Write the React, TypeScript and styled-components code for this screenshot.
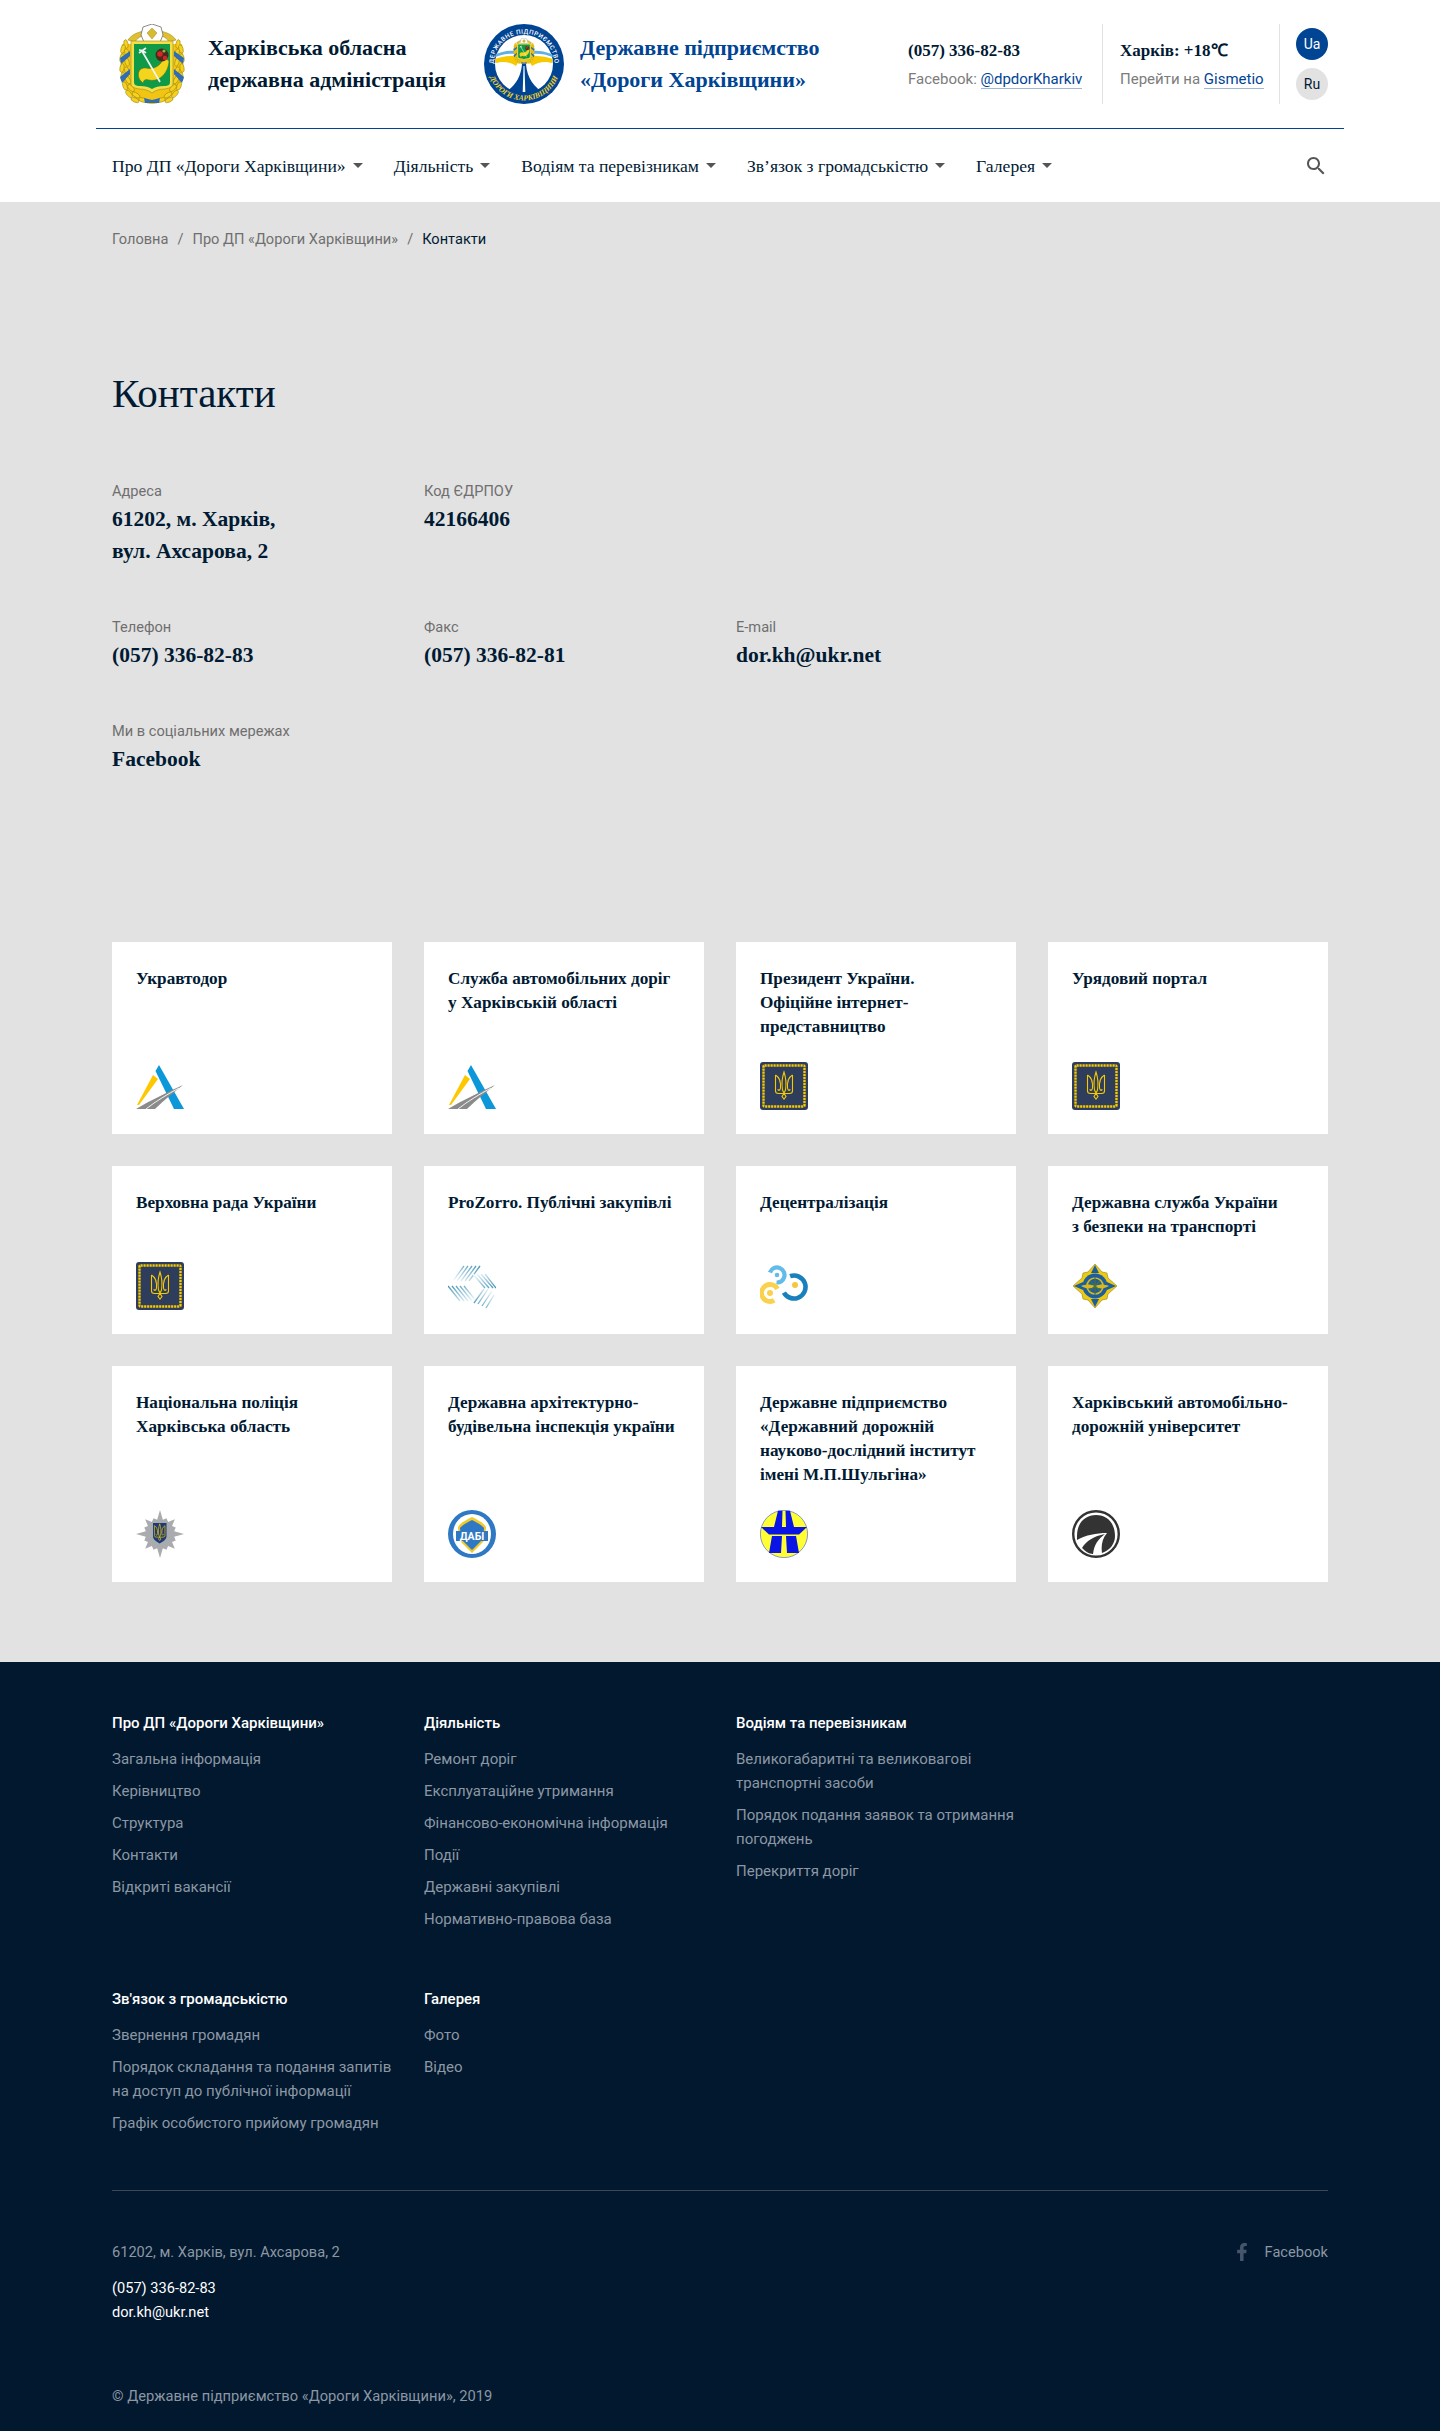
import React from "react";
import styled, { createGlobalStyle } from "styled-components";
import { FaFacebookF } from "react-icons/fa";

const SERIF = `"Liberation Serif", serif`;
const SANS = `"Roboto", "Noto Sans", sans-serif`;
const INK = "#011a33";
const BLUE = "#004494";

const Global = createGlobalStyle`
    * { box-sizing: border-box; }
    body {
        margin: 0;
        background: #e2e2e2;
        color: ${INK};
        font-family: ${SANS};
    }
    a { color: inherit; text-decoration: none; }
`;

const Container = styled.div`
    width: 1248px;
    margin: 0 auto;
`;

const HeaderBox = styled.header`
    background: #fff;
    height: 202px;
`;

const TopBar = styled.div`
    display: flex;
    align-items: center;
    height: 129px;
    padding: 0 0 1px 23px;
    border-bottom: 1px solid ${BLUE};
`;

const Brand = styled.a<{ $w: number }>`
    display: flex;
    align-items: center;
    width: ${(p) => p.$w}px;
    height: 80px;
    flex: none;
`;

const BrandName = styled.div<{ $blue?: boolean; $gap: number }>`
    margin-left: ${(p) => p.$gap}px;
    font: bold 22px/32px ${SERIF};
    color: ${(p) => (p.$blue ? BLUE : INK)};
    white-space: nowrap;
`;

const InfoCol = styled.div<{ $w: number; $last?: boolean }>`
    width: ${(p) => p.$w}px;
    height: 80px;
    padding-left: ${(p) => (p.$last ? 17 : 0)}px;
    border-right: 1px solid #e2e2e2;
    flex: none;
`;

const InfoTop = styled.div`
    font: bold 17px/24px ${SERIF};
    margin-top: 15px;
`;

const InfoSub = styled.div`
    font-size: 15px;
    line-height: 24px;
    margin-top: 4px;
    color: #7c7c7c;
`;

const BlueLink = styled.a`
    color: ${BLUE};
    border-bottom: 1px solid #9fb8d6;
`;

const LangCol = styled.div`
    display: flex;
    flex-direction: column;
    gap: 8px;
    margin-left: 16px;
`;

const Lang = styled.a<{ $active?: boolean }>`
    width: 32px;
    height: 32px;
    border-radius: 50%;
    display: flex;
    align-items: center;
    justify-content: center;
    font-size: 14px;
    background: ${(p) => (p.$active ? BLUE : "#e2e2e2")};
    color: ${(p) => (p.$active ? "#fff" : INK)};
`;

const NavBar = styled.nav`
    display: flex;
    align-items: center;
    height: 73px;
    padding: 0 16px;
`;

const NavItem = styled.a`
    display: flex;
    align-items: center;
    font: 17.6px/24px ${SERIF};
    margin-right: 31px;
    white-space: nowrap;

    &::after {
        content: "";
        margin-left: 7px;
        border-left: 5px solid transparent;
        border-right: 5px solid transparent;
        border-top: 5px solid #555;
    }
`;

const SearchBtn = styled.a`
    display: flex;
    margin-left: auto;
    color: #555;
`;

const Main = styled.main`
    padding: 25px 16px 80px;
`;

const Crumbs = styled.div`
    display: flex;
    font-size: 14.6px;
    line-height: 24px;
    color: #6f6f6f;
`;

const Sep = styled.span`
    margin: 0 9px;
`;

const Current = styled.span`
    color: ${INK};
`;

const Title = styled.h1`
    margin: 118px 0 62px;
    font: 400 41px/48px ${SERIF};
`;

const FieldGrid = styled.div`
    display: grid;
    grid-template-columns: repeat(4, 280px);
    column-gap: 32px;
    row-gap: 48px;
`;

const FieldLabel = styled.div`
    font-size: 14.6px;
    line-height: 24px;
    color: #6f6f6f;
`;

const FieldValue = styled.div`
    font: bold 21.5px/32px ${SERIF};
`;

const Cards = styled.div`
    display: grid;
    grid-template-columns: repeat(4, 280px);
    gap: 32px;
    margin-top: 167px;
`;

const Card = styled.a`
    display: flex;
    flex-direction: column;
    justify-content: space-between;
    gap: 23px;
    padding: 24px;
    background: #fff;
`;

const CardTitle = styled.div`
    margin-top: 1px;
    font: bold 17.2px/24px ${SERIF};
`;

const CardLogo = styled.svg`
    display: block;
    width: 48px;
    height: 48px;
`;

const FooterBox = styled.footer`
    background: #01182f;
    color: #8c97a3;
    padding: 49px 0 23px;
`;

const FooterInner = styled.div`
    padding: 0 16px;
`;

const FooterGrid = styled.div`
    display: grid;
    grid-template-columns: repeat(4, 280px);
    column-gap: 32px;
    row-gap: 56px;
`;

const FootHead = styled.div`
    font-size: 15px;
    font-weight: 500;
    line-height: 24px;
    color: #fff;
    margin-bottom: 12px;
`;

const FootLinks = styled.div`
    display: flex;
    flex-direction: column;
    gap: 8px;
    font-size: 15px;
    line-height: 24px;
`;

const Rule = styled.div`
    height: 1px;
    background: #39495a;
    margin: 55px 0 49px;
`;

const AddressRow = styled.div`
    display: flex;
    justify-content: space-between;
    align-items: center;
    font-size: 14.6px;
    line-height: 24px;
    margin-bottom: 12px;
`;

const FbLink = styled.a`
    display: flex;
    align-items: center;
    gap: 14px;
    svg {
        color: #46566a;
        font-size: 18px;
    }
`;

const WhiteLine = styled.div`
    color: #fff;
    font-size: 14.6px;
    line-height: 24px;
`;

const Copy = styled.div`
    margin-top: 60px;
    font-size: 14.7px;
    line-height: 24px;
`;

// wreath leaves of the oblast arms: [x, y, rotation] for the left side, mirrored for the right
const leaves: [number, number, number][] = [
    [7, 20, -10], [4, 25, 15], [8, 29, -15], [3, 34, 12], [8, 38, -15], [3, 44, 10], [8, 47, -20],
    [4, 53, 0], [9, 56, -30], [6, 62, -20], [12, 64, -45], [10, 70, -40], [17, 71, -60], [16, 76, -65], [24, 76, -75],
];

const Coat = () => (
    <>
        <path d="M3 20C0 40 1 60 11 70c6 6 14 9 20 10h4c6-1 14-4 20-10 10-10 11-30 8-50z" fill="#f2c414" />
        {leaves.map(([x, y, r], i) => (
            <g key={i}>
                <ellipse cx={x} cy={y} rx="2.1" ry="4.4" fill="#f6d21f" stroke="#8f7a14" strokeWidth=".5" transform={`rotate(${r} ${x} ${y})`} />
                <ellipse cx={66 - x} cy={y} rx="2.1" ry="4.4" fill="#f6d21f" stroke="#8f7a14" strokeWidth=".5" transform={`rotate(${-r} ${66 - x} ${y})`} />
            </g>
        ))}
        <path d="M1 34l10-7v5L2 40zM1 53l10-8v5L3 59zM65 34l-10-7v5l9 8zM65 53l-10-8v5l8 9zM25 74l8 2 8-2-1 5H26z" fill="#2f6db5" />
        <path d="M9 16c3-5 10-8 16-9l1 4c-4 1-8 3-10 7zM57 16c-3-5-10-8-16-9l-1 4c4 1 8 3 10 7z" fill="#e0c02e" stroke="#8f7a14" strokeWidth=".5" />
        <path d="M24 3l9-3 9 3 2 8-3 7H25l-3-7z" fill="#fff" stroke="#6d6d6d" strokeWidth=".8" />
        <path d="M33 4l5 5-5 6-5-6z" fill="#d8ba2e" stroke="#8f7a14" strokeWidth=".4" />
        <path d="M12 17h42v42c0 4-3 5-8 6-5 0-9 1-13 4-4-3-8-4-13-4-5-1-8-2-8-6z" fill="#f4de45" stroke="#9b8a1f" strokeWidth=".6" />
        <path d="M15 20h36v38c0 3-2 4-6 4-5 0-9 1-12 3-3-2-7-3-12-3-4 0-6-1-6-4z" fill="#0f9a48" />
        <path d="M21 56c-4-7 0-13 6-12 8 2 15-2 18-11l5 4c-1 13-10 21-20 19-3-1-5-1-6 3z" fill="#f4d51d" stroke="#76680e" strokeWidth=".5" />
        <path d="M23 27l18 31M20 29l7-5M20 26c3 0 5 1 7 3" stroke="#f2f2f2" strokeWidth="1.7" fill="none" />
        <circle cx="43" cy="31" r="6.5" fill="#4b2a1a" />
        <circle cx="41" cy="30" r="2.8" fill="#d3262a" />
        <circle cx="46" cy="34" r="2.2" fill="#d3262a" />
        <circle cx="45" cy="27" r="1.6" fill="#7fbf3a" />
    </>
);

const RoadLogo = () => (
    <svg width="80" height="80" viewBox="0 0 80 80">
        <defs>
            <path id="ringTop" d="M11 49.5A30.5 30.5 0 1 1 69 49.5" />
            <path id="ringBottom" d="M4.4 48A36.5 36.5 0 0 0 75.6 48" />
        </defs>
        <circle cx="40" cy="40" r="40" fill={BLUE} />
        <circle cx="40" cy="40" r="29" fill="#fff" />
        <path d="M11 35c9-3 18-4 26-2l-5 9c-6-4-13-5-20-3zM69 35c-9-3-18-4-26-2l5 9c6-4 13-5 20-3z" fill="#f6c900" />
        <path d="M12 30c8-3 15-4 21-3v3c-8-1-14 0-22 3zM68 30c-8-3-15-4-21-3v3c8-1 14 0 22 3z" fill="#5fb0e4" />
        <path d="M38 40h4c1 14 8 24 20 30L52 76H28l-10-6c12-6 19-16 20-30z" fill={BLUE} />
        <path d="M39.5 42h1l.8 26h-2.6z" fill="#fff" />
        <svg x="29" y="14" width="22" height="26" viewBox="0 0 66 80"><Coat /></svg>
        <text fill="#fff" fontFamily={SANS} fontSize="6.2" fontWeight="500" letterSpacing=".5">
            <textPath href="#ringTop" startOffset="50%" textAnchor="middle">ДЕРЖАВНЕ ПІДПРИЄМСТВО</textPath>
        </text>
        <text fill="#f6d21f" fontFamily={SERIF} fontSize="7.6" fontWeight="700" fontStyle="italic">
            <textPath href="#ringBottom" startOffset="50%" textAnchor="middle">ДОРОГИ ХАРКІВЩИНИ</textPath>
        </text>
    </svg>
);

const Ukravtodor = () => (
    <CardLogo viewBox="0 0 48 48">
        <path d="M23 3l-3.500 6L38 47h10z" fill="#0b97d8" />
        <path d="M17 13l5 4L3 43H1z" fill="#fdc800" />
        <path d="M0 47c15-9 30-16 47-24-10 8-20 16-28 24z" fill="#8b8b8b" />
        <path d="M10 47c10-8 22-15 33-21" stroke="#fff" strokeWidth=".9" fill="none" />
    </CardLogo>
);

const Trident = ({ color }: { color: string }) => (
    <g fill="none" stroke={color} strokeWidth="1.1">
        <path d="M24 10c-2 6-2.500 12-1.500 18L24 31l1.500-3c1-6 .5-12-1.500-18z" />
        <path d="M15.500 13v16q0 2.500 3 2.500H24M32.500 13v16q0 2.500-3 2.500H24" />
        <path d="M15.500 13c3.500 2 5.500 6 5 13-.5 3-2.500 3-2.500 1M32.500 13c-3.500 2-5.500 6-5 13 .5 3 2.500 3 2.500 1" />
        <path d="M24 31.500l-2 3 2 2.500 2-2.500z" />
    </g>
);

const Gov = () => (
    <CardLogo viewBox="0 0 48 48">
        <rect width="48" height="48" rx="3" fill="#2e3d5c" />
        <rect x="3.500" y="3.500" width="41" height="41" rx="1" fill="none" stroke="#f6c900" strokeWidth="2.400" strokeDasharray="2.200 .8" />
        <Trident color="#f6c900" />
    </CardLogo>
);

const Prozorro = () => (
    <CardLogo viewBox="0 0 48 48">
        <defs>
            <linearGradient id="pzA" x1="1" y1="0" x2="0" y2="1">
                <stop offset="0" stopColor="#3f93b5" />
                <stop offset="1" stopColor="#fff" />
            </linearGradient>
            <linearGradient id="pzB" x1="0" y1="0" x2="1" y2="1">
                <stop offset="0" stopColor="#fff" />
                <stop offset="1" stopColor="#3f93b5" />
            </linearGradient>
            <linearGradient id="pzC" x1="0" y1="0" x2="1" y2="1">
                <stop offset="0" stopColor="#3f93b5" />
                <stop offset="1" stopColor="#fff" />
            </linearGradient>
            <linearGradient id="pzD" x1="1" y1="0" x2="0" y2="1">
                <stop offset="0" stopColor="#fff" />
                <stop offset="1" stopColor="#3f93b5" />
            </linearGradient>
        </defs>
        <path d="M16 4L5 19M20 4L9 19M24 4L13 19M28 4L17 19M32 4L21 19" stroke="url(#pzA)" strokeWidth="1.300" />
        <path d="M25 12l12 14M29 12l12 14M33 12l12 14M37 12l11 14" stroke="url(#pzB)" strokeWidth="1.300" />
        <path d="M0 24l12 15M4 24l12 15M8 24l12 15M12 24l12 15M16 24l12 15" stroke="url(#pzC)" strokeWidth="1.300" />
        <path d="M26 41l10-14M30 42l10-15M34 44l10-15M38 46l8-13" stroke="url(#pzD)" strokeWidth="1.300" />
    </CardLogo>
);

const Decentral = () => (
    <CardLogo viewBox="0 0 48 48">
        <circle cx="17" cy="13" r="7.500" fill="none" stroke="#63bbe9" strokeWidth="4.200" strokeDasharray="33 14" transform="rotate(200 17 13)" />
        <circle cx="34" cy="25" r="11.500" fill="none" stroke="#1a7fbd" strokeWidth="4.600" strokeDasharray="52 20" transform="rotate(250 34 25)" />
        <circle cx="10" cy="31" r="8.500" fill="none" stroke="#fbd14b" strokeWidth="4.800" strokeDasharray="40 14" transform="rotate(60 10 31)" />
        <circle cx="35" cy="23" r="3" fill="#f9c63b" />
        <circle cx="10" cy="31" r="3" fill="#fbd14b" />
        <circle cx="17" cy="13" r="2.300" fill="#63bbe9" />
    </CardLogo>
);

const Transport = () => (
    <CardLogo viewBox="0 0 48 48">
        <path d="M23 2l7 8 5 1 1 5 9 8-9 8-1 5-5 1-7 8-7-8-5-1-1-5-9-8 9-8 1-5 5-1z" fill="#eec912" stroke="#8f811c" strokeWidth=".6" />
        <path d="M23 3l4 8h-8zM23 45l4-8h-8zM2 24l9-4v8zM44 24l-9-4v8z" fill="#1c5e9e" />
        <circle cx="23" cy="24" r="12.500" fill="#1c5e9e" />
        <circle cx="23" cy="24" r="8" fill="none" stroke="#d7b81f" strokeWidth="1.600" />
        <path d="M9 24c5-2 9-2 14 0 5-2 9-2 14 0-5 3-9 3-14 1-5 2-9 2-14-1z" fill="#d7b81f" />
        <path d="M23 15v18M18 19l10 10M28 19L18 29" stroke="#4f6f3f" strokeWidth="1.200" />
    </CardLogo>
);

// police star: eight big points, with short rays in between
const starPoints = Array.from({ length: 32 }, (_, i) => {
    const a = (i * Math.PI) / 16;
    const r = i % 8 === 0 ? 24 : i % 8 === 4 ? 21 : i % 2 === 0 ? 17 : 14.5;
    return `${24 + r * Math.sin(a)},${24 - r * Math.cos(a)}`;
}).join(" ");

const Police = () => (
    <CardLogo viewBox="0 0 48 48">
        <polygon points={starPoints} fill="#a9abae" />
        <path d="M17 13h13.500v13c0 4-3.500 5.500-6.800 7.500C20.500 31.500 17 30 17 26z" fill="#1c3a78" />
        <g transform="translate(23.700 22.500) scale(.62) translate(-24 -24)">
            <Trident color="#f6c900" />
        </g>
    </CardLogo>
);

const Dabi = () => (
    <CardLogo viewBox="0 0 48 48">
        <ellipse cx="24" cy="24" rx="24" ry="24" fill="#2f78c4" />
        <ellipse cx="24" cy="24" rx="19" ry="20" fill="#fff" />
        <path d="M24 7c6 3 12 6 14 10l-1 13-13 13-13-13-1-13c2-4 8-7 14-10z" fill="#f0cb2b" />
        <path d="M24 10c5 3 10 5 12 8l-1 11-11 11-11-11-1-11c2-3 7-5 12-8z" fill="#2f78c4" />
        <rect x="8" y="21" width="32" height="10" fill="#2f78c4" />
        <text x="24" y="30" fill="#fff" fontFamily={SANS} fontSize="10.500" fontWeight="700" textAnchor="middle">ДАБІ</text>
    </CardLogo>
);

const Shulgin = () => (
    <CardLogo viewBox="0 0 48 48">
        <ellipse cx="24" cy="24" rx="23.600" ry="23.600" fill="#ffff33" stroke="#6f7fc6" strokeWidth=".8" />
        <path d="M18 .8h4.500L22 17h-8zM25.500 .8H30l4 16.200h-8z" fill="#0a14e6" />
        <path d="M1 17h46l-8 7.500H9z" fill="#0a14e6" />
        <path d="M12 26h10l-1 17H9zM26 26h10l3 17H27z" fill="#0a14e6" />
    </CardLogo>
);

const Khadi = () => (
    <CardLogo viewBox="0 0 48 48">
        <ellipse cx="24" cy="24" rx="22.800" ry="22.800" fill="#fff" stroke="#333" strokeWidth="2.400" />
        <path d="M5 26C5 13 13 5 24 5c12 0 19 9 19 21 0 8-5 14-13 17-1-7 0-14 5-20-11 0-21 2-30 7z" fill="#333" />
        <path d="M10 38c4-7 12-12 23-14-7 5-11 11-12 20-4 0-8-3-11-6z" fill="#333" />
    </CardLogo>
);

const cards: { title: React.ReactNode; logo: React.ReactNode }[] = [
    { title: "Укравтодор", logo: <Ukravtodor /> },
    { title: <>Служба автомобільних доріг<br />у Харківській області</>, logo: <Ukravtodor /> },
    { title: <>Президент України.<br />Офіційне інтернет-<br />представництво</>, logo: <Gov /> },
    { title: "Урядовий портал", logo: <Gov /> },
    { title: "Верховна рада України", logo: <Gov /> },
    { title: "ProZorro. Публічні закупівлі", logo: <Prozorro /> },
    { title: "Децентралізація", logo: <Decentral /> },
    { title: <>Державна служба України<br />з безпеки на транспорті</>, logo: <Transport /> },
    { title: <>Національна поліція<br />Харківська область</>, logo: <Police /> },
    { title: <>Державна архітектурно-<br />будівельна інспекція україни</>, logo: <Dabi /> },
    { title: <>Державне підприємство<br />«Державний дорожній<br />науково-дослідний інститут<br />імені М.П.Шульгіна»</>, logo: <Shulgin /> },
    { title: <>Харківський автомобільно-<br />дорожній університет</>, logo: <Khadi /> },
];

const footerCols: { head: string; links: React.ReactNode[] }[] = [
    { head: "Про ДП «Дороги Харківщини»", links: ["Загальна інформація", "Керівництво", "Структура", "Контакти", "Відкриті вакансії"] },
    { head: "Діяльність", links: ["Ремонт доріг", "Експлуатаційне утримання", "Фінансово-економічна інформація", "Події", "Державні закупівлі", "Нормативно-правова база"] },
    { head: "Водіям та перевізникам", links: [<>Великогабаритні та великовагові<br />транспортні засоби</>, <>Порядок подання заявок та отримання<br />погоджень</>, "Перекриття доріг"] },
    { head: "", links: [] },
    { head: "Зв'язок з громадськістю", links: ["Звернення громадян", <>Порядок складання та подання запитів<br />на доступ до публічної інформації</>, "Графік особистого прийому громадян"] },
    { head: "Галерея", links: ["Фото", "Відео"] },
];

const navItems = ["Про ДП «Дороги Харківщини»", "Діяльність", "Водіям та перевізникам", "Зв’язок з громадськістю", "Галерея"];

export default function App() {
    return (
        <>
            <Global />
            <HeaderBox>
                <Container>
                    <TopBar>
                        <Brand $w={365}>
                            <svg width="66" height="80" viewBox="0 0 66 80"><Coat /></svg>
                            <BrandName $gap={23}>Харківська обласна<br />державна адміністрація</BrandName>
                        </Brand>
                        <Brand $w={424}>
                            <RoadLogo />
                            <BrandName $gap={16} $blue>Державне підприємство<br />«Дороги Харківщини»</BrandName>
                        </Brand>
                        <InfoCol $w={195}>
                            <InfoTop>(057) 336-82-83</InfoTop>
                            <InfoSub>Facebook: <BlueLink>@dpdorKharkiv</BlueLink></InfoSub>
                        </InfoCol>
                        <InfoCol $w={177} $last>
                            <InfoTop>Харків: +18℃</InfoTop>
                            <InfoSub>Перейти на <BlueLink>Gismetio</BlueLink></InfoSub>
                        </InfoCol>
                        <LangCol>
                            <Lang $active>Ua</Lang>
                            <Lang>Ru</Lang>
                        </LangCol>
                    </TopBar>
                    <NavBar>
                        {navItems.map((n) => <NavItem key={n}>{n}</NavItem>)}
                        <SearchBtn>
                            <svg width="24" height="24" viewBox="0 0 24 24" fill="currentColor">
                                <path d="M15.5 14h-.79l-.28-.27C15.41 12.59 16 11.11 16 9.5 16 5.91 13.09 3 9.5 3S3 5.91 3 9.5 5.91 16 9.5 16c1.61 0 3.09-.59 4.23-1.57l.27.28v.79l5 4.99L20.49 19l-4.99-5zm-6 0C7.01 14 5 11.99 5 9.5S7.01 5 9.5 5 14 7.01 14 9.5 11.99 14 9.5 14z" />
                            </svg>
                        </SearchBtn>
                    </NavBar>
                </Container>
            </HeaderBox>
            <Container>
                <Main>
                    <Crumbs>
                        <span>Головна</span><Sep>/</Sep>
                        <span>Про ДП «Дороги Харківщини»</span><Sep>/</Sep>
                        <Current>Контакти</Current>
                    </Crumbs>
                    <Title>Контакти</Title>
                    <FieldGrid>
                        <div>
                            <FieldLabel>Адреса</FieldLabel>
                            <FieldValue>61202, м. Харків,<br />вул. Ахсарова, 2</FieldValue>
                        </div>
                        <div>
                            <FieldLabel>Код ЄДРПОУ</FieldLabel>
                            <FieldValue>42166406</FieldValue>
                        </div>
                        <div />
                        <div />
                        <div>
                            <FieldLabel>Телефон</FieldLabel>
                            <FieldValue>(057) 336-82-83</FieldValue>
                        </div>
                        <div>
                            <FieldLabel>Факс</FieldLabel>
                            <FieldValue>(057) 336-82-81</FieldValue>
                        </div>
                        <div>
                            <FieldLabel>E-mail</FieldLabel>
                            <FieldValue>dor.kh@ukr.net</FieldValue>
                        </div>
                        <div />
                        <div>
                            <FieldLabel>Ми в соціальних мережах</FieldLabel>
                            <FieldValue>Facebook</FieldValue>
                        </div>
                    </FieldGrid>
                    <Cards>
                        {cards.map((c, i) => (
                            <Card key={i}>
                                <CardTitle>{c.title}</CardTitle>
                                {c.logo}
                            </Card>
                        ))}
                    </Cards>
                </Main>
            </Container>
            <FooterBox>
                <Container>
                    <FooterInner>
                        <FooterGrid>
                            {footerCols.map((col, i) => (
                                <div key={i}>
                                    {col.head && <FootHead>{col.head}</FootHead>}
                                    <FootLinks>
                                        {col.links.map((l, j) => <a key={j}>{l}</a>)}
                                    </FootLinks>
                                </div>
                            ))}
                        </FooterGrid>
                        <Rule />
                        <AddressRow>
                            <span>61202, м. Харків, вул. Ахсарова, 2</span>
                            <FbLink><FaFacebookF />Facebook</FbLink>
                        </AddressRow>
                        <WhiteLine>(057) 336-82-83</WhiteLine>
                        <WhiteLine>dor.kh@ukr.net</WhiteLine>
                        <Copy>© Державне підприємство «Дороги Харківщини», 2019</Copy>
                    </FooterInner>
                </Container>
            </FooterBox>
        </>
    );
}
